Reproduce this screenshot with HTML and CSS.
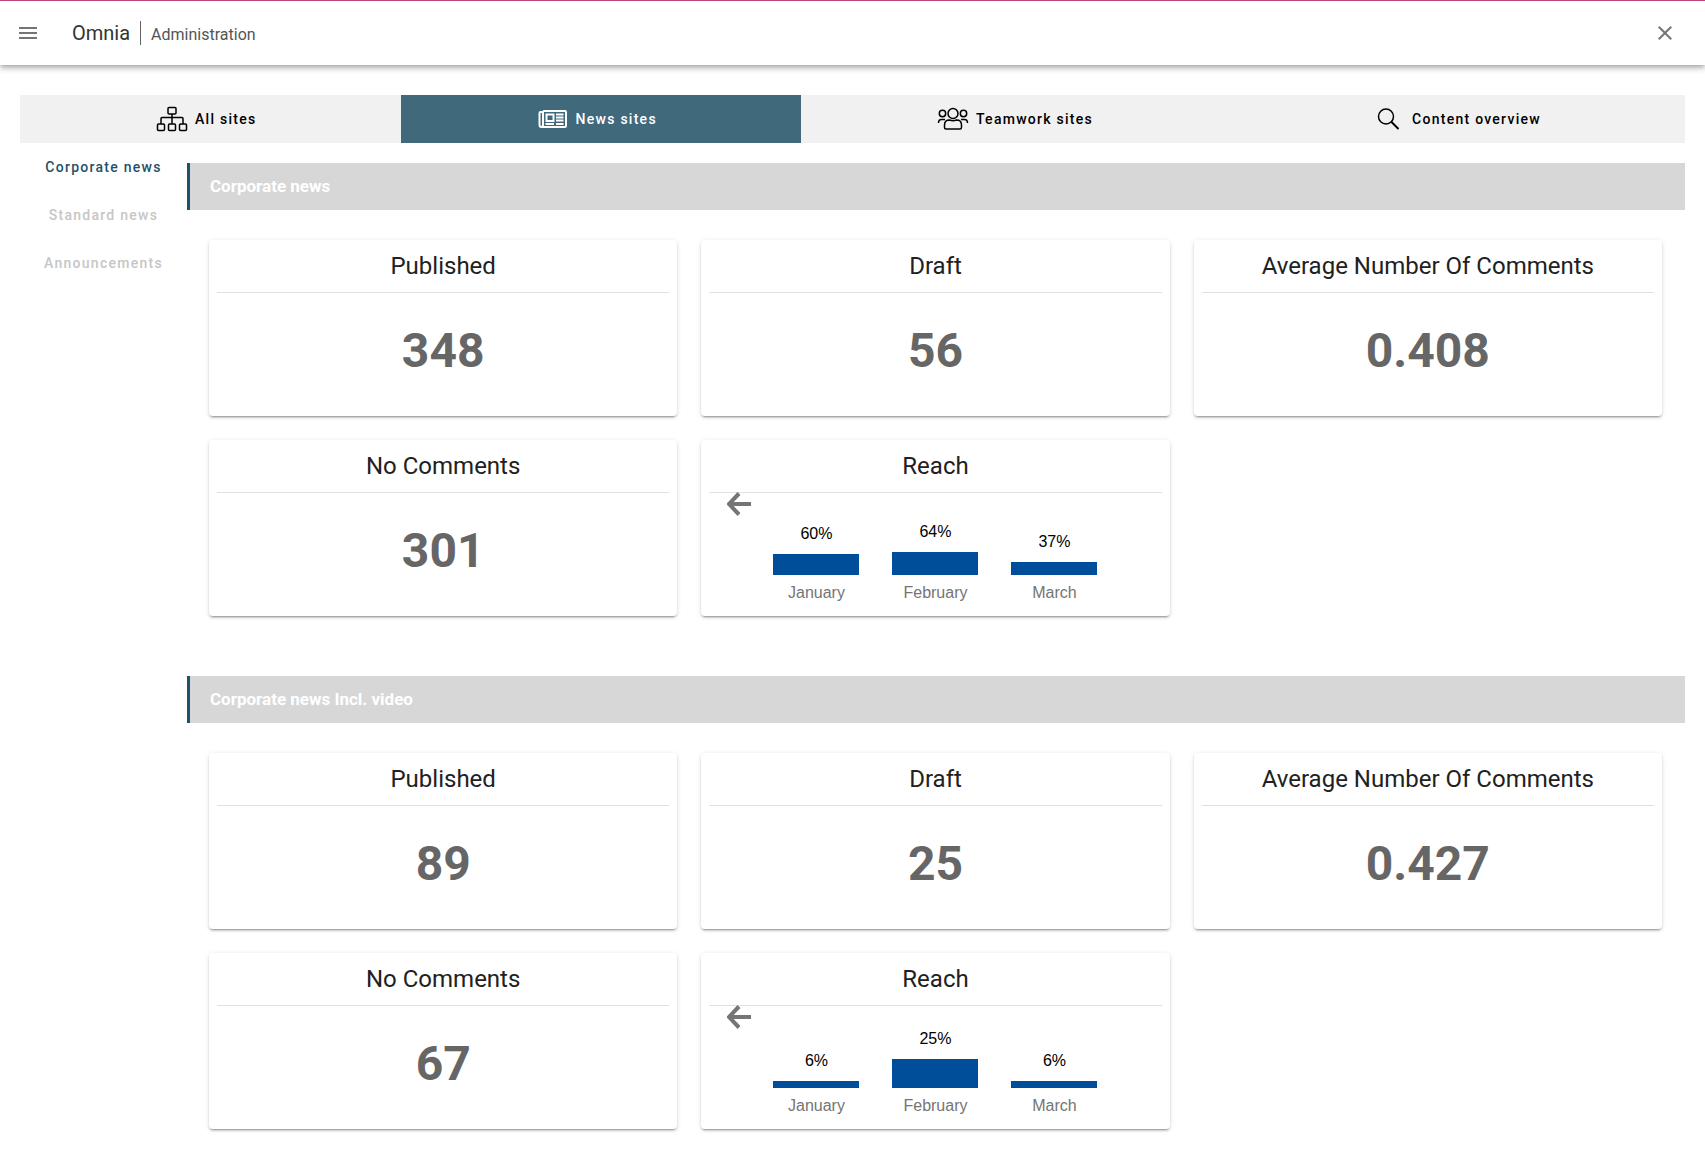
FILE: index.html
```html
<!DOCTYPE html>
<html lang="en">
<head>
<meta charset="utf-8">
<meta name="viewport" content="width=device-width, initial-scale=1">
<title>Omnia Administration</title>
<link rel="stylesheet" href="styles.css">
</head>
<body>
<header class="topbar">
  <button class="icon-button" type="button" aria-label="Menu">
    <svg class="icon" viewBox="0 0 24 24"><path d="M3 6h18v2H3zM3 11h18v2H3zM3 16h18v2H3z"/></svg>
  </button>
  <div class="brand">
    <span class="brand-name">Omnia</span>
    <span class="brand-area">Administration</span>
  </div>
  <button class="icon-button" type="button" aria-label="Close">
    <svg class="icon" viewBox="0 0 24 24"><path d="M19 6.41 17.59 5 12 10.59 6.41 5 5 6.41 10.59 12 5 17.59 6.41 19 12 13.41 17.59 19 19 17.59 13.41 12z"/></svg>
  </button>
</header>

<main class="page">
  <nav class="tabs" aria-label="Site types">
    <button class="tab" type="button">
      <svg class="tab-icon" viewBox="0 0 32 26"><rect x="12" y="1.5" width="8" height="6.5" rx="1"/><path d="M16 8v10M5 18v-5.5q0-1 1-1h20q1 0 1 1V18"/><rect x="1.5" y="18" width="7" height="6.5" rx="1"/><rect x="12.5" y="18" width="7" height="6.5" rx="1"/><rect x="23.5" y="18" width="7" height="6.5" rx="1"/></svg>
      All sites
    </button>
    <button class="tab tab-active" type="button">
      <svg class="tab-icon tab-icon-bold" viewBox="0 0 32 26"><path d="M6 5h22q1 0 1 1v14q0 1-1 1H4.500q-2 0-2-2V7q0-1 1-1H5.500M6 5v14q0 1.500-1.500 1.500"/><rect x="9.500" y="8.500" width="7" height="6.500"/><path d="M19 8.500h7.500M19 11.500h7.500M19 14.500h7.500M8.500 18h8.500M19 18h7.500"/></svg>
      News sites
    </button>
    <button class="tab" type="button">
      <svg class="tab-icon" viewBox="0 0 32 26"><circle cx="16" cy="7.5" r="5"/><circle cx="5.5" cy="7.5" r="3.2"/><circle cx="26.5" cy="7.5" r="3.2"/><path d="M7.500 21.500V19q0-5 5-5 3.500 1.500 7 0 5 0 5 5v2.500q0 1.500-1.500 1.500H9q-1.500 0-1.500-1.500zM1.500 17q0-3.500 3-3.500H8M30.500 17q0-3.500-3-3.500H24"/></svg>
      Teamwork sites
    </button>
    <button class="tab" type="button">
      <svg class="tab-icon" viewBox="0 0 32 26"><circle cx="13" cy="10.5" r="7.5"/><path class="stroke-bold" d="m18.500 16 7 7"/></svg>
      Content overview
    </button>
  </nav>

  <div class="content">
    <nav class="side" aria-label="News channels">
      <button class="side-item side-active" type="button">Corporate news</button>
      <button class="side-item" type="button">Standard news</button>
      <button class="side-item" type="button">Announcements</button>
    </nav>

    <div class="sections">
      <section class="section">
        <h2 class="section-title">Corporate news</h2>
        <div class="cards">
          <article class="card"><h3 class="card-title">Published</h3><p class="figure">348</p></article>
          <article class="card"><h3 class="card-title">Draft</h3><p class="figure">56</p></article>
          <article class="card"><h3 class="card-title">Average Number Of Comments</h3><p class="figure">0.408</p></article>
          <article class="card"><h3 class="card-title">No Comments</h3><p class="figure">301</p></article>
          <article class="card">
            <h3 class="card-title">Reach</h3>
            <button class="back" type="button" aria-label="Previous months"><svg viewBox="0 0 24 24"><path d="M24 12H2M12 1.500 2 12l10 10.500"/></svg></button>
            <div class="chart">
              <div class="column"><span class="value">60%</span><span class="bar" style="height:21px"></span><span class="month">January</span></div>
              <div class="column"><span class="value">64%</span><span class="bar" style="height:23px"></span><span class="month">February</span></div>
              <div class="column"><span class="value">37%</span><span class="bar" style="height:13px"></span><span class="month">March</span></div>
            </div>
          </article>
        </div>
      </section>

      <section class="section">
        <h2 class="section-title">Corporate news Incl. video</h2>
        <div class="cards">
          <article class="card"><h3 class="card-title">Published</h3><p class="figure">89</p></article>
          <article class="card"><h3 class="card-title">Draft</h3><p class="figure">25</p></article>
          <article class="card"><h3 class="card-title">Average Number Of Comments</h3><p class="figure">0.427</p></article>
          <article class="card"><h3 class="card-title">No Comments</h3><p class="figure">67</p></article>
          <article class="card">
            <h3 class="card-title">Reach</h3>
            <button class="back" type="button" aria-label="Previous months"><svg viewBox="0 0 24 24"><path d="M24 12H2M12 1.500 2 12l10 10.500"/></svg></button>
            <div class="chart">
              <div class="column"><span class="value">6%</span><span class="bar" style="height:7px"></span><span class="month">January</span></div>
              <div class="column"><span class="value">25%</span><span class="bar" style="height:29px"></span><span class="month">February</span></div>
              <div class="column"><span class="value">6%</span><span class="bar" style="height:7px"></span><span class="month">March</span></div>
            </div>
          </article>
        </div>
      </section>
    </div>
  </div>
</main>
</body>
</html>
```
FILE: styles.css
```css
* {
  box-sizing: border-box;
}

body {
  margin: 0;
  background: #fff;
  color: #212121;
  font-family: Roboto, "Liberation Sans", sans-serif;
}

button {
  padding: 0;
  border: 0;
  background: none;
  font: inherit;
  cursor: pointer;
}

h2,
h3,
p {
  margin: 0;
}

/* Top bar */
.topbar {
  display: flex;
  align-items: center;
  height: 65px;
  padding: 0 28px 0 16px;
  border-top: 1px solid #b9457a;
  background: #fff;
  box-shadow: 0 2px 4px -1px rgba(0, 0, 0, .2), 0 4px 5px rgba(0, 0, 0, .14), 0 1px 10px rgba(0, 0, 0, .12);
}

.icon-button {
  display: flex;
}

.icon {
  width: 24px;
  height: 24px;
  fill: #757575;
}

.brand {
  display: flex;
  flex: 1;
  align-items: center;
  margin-left: 32px;
}

.brand-name {
  padding-right: 10px;
  border-right: 1px solid #616161;
  color: #333;
  font-size: 20px;
  line-height: 24px;
}

.brand-area {
  padding: 3px 0 0 10px;
  color: #555;
  font-size: 16px;
  line-height: 20px;
}

/* Tabs */
.page {
  padding: 30px 20px 36px;
}

.tabs {
  display: flex;
  background: #f1f1f1;
}

.tab {
  display: flex;
  flex: 1 1 auto;
  align-items: center;
  justify-content: center;
  gap: 7px;
  height: 48px;
  padding: 0 24px 0 16px;
  color: #000;
  font-size: 14px;
  font-weight: 500;
  letter-spacing: .09em;
}

.tab-active {
  background: #40697c;
  color: #fff;
}

.tab-icon {
  width: 32px;
  height: 26px;
  fill: none;
  stroke: currentColor;
  stroke-width: 1.5;
}

.tab-icon-bold,
.stroke-bold {
  stroke-width: 2;
}

/* Side navigation and sections */
.content {
  display: flex;
}

.side {
  display: flex;
  flex: 0 0 167px;
  flex-direction: column;
}

.side-item {
  height: 48px;
  color: #c6c6c6;
  font-size: 14px;
  font-weight: 500;
  letter-spacing: .09em;
}

.side-active {
  color: #1f5268;
}

.sections {
  display: flex;
  flex: 1;
  flex-direction: column;
  gap: 60px;
  padding-top: 20px;
}

.section-title {
  padding: 0 20px;
  border-left: 3px solid #1f5268;
  background: #d7d7d7;
  color: #fff;
  font-size: 17px;
  line-height: 47px;
}

.cards {
  display: grid;
  grid-template-columns: repeat(3, minmax(0, 1fr));
  gap: 24px;
  padding: 30px 23px 0 22px;
}

.card {
  position: relative;
  height: 176px;
  padding: 0 8px;
  border-radius: 4px;
  background: #fff;
  box-shadow: 0 3px 1px -2px rgba(0, 0, 0, .2), 0 2px 2px rgba(0, 0, 0, .14), 0 1px 5px rgba(0, 0, 0, .12);
  text-align: center;
}

.card-title {
  border-bottom: 1px solid #e0e0e0;
  font-size: 24px;
  font-weight: 400;
  line-height: 52px;
}

.figure {
  color: #666;
  font-size: 48px;
  font-weight: 700;
  line-height: 116px;
}

/* Reach chart */
.back {
  position: absolute;
  top: 52px;
  left: 26px;
  display: flex;
}

.back svg {
  width: 24px;
  height: 24px;
  fill: none;
  stroke: #757575;
  stroke-width: 4;
}

.chart {
  display: flex;
  justify-content: center;
  height: 123px;
  font-family: "Liberation Sans", Arial, sans-serif;
  font-size: 16px;
  line-height: 20px;
}

.column {
  display: flex;
  flex: 0 0 119px;
  flex-direction: column;
  align-items: center;
  justify-content: flex-end;
}

.value {
  margin-bottom: 10px;
  color: #000;
}

.bar {
  width: 86px;
  background: #004d99;
}

.month {
  margin-top: 8px;
  padding-bottom: 13px;
  color: #757575;
}
```
